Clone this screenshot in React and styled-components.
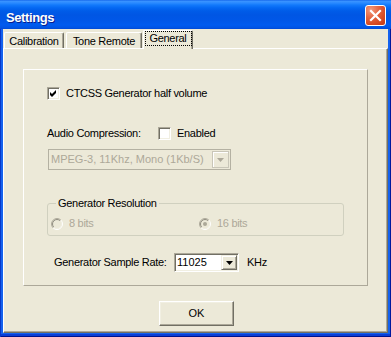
import React from "react";
import styled, { createGlobalStyle } from "styled-components";

const FONT = `"Liberation Sans", Arial, sans-serif`;

const Global = createGlobalStyle`
  html, body { margin: 0; padding: 0; background: #fff; overflow: hidden; }
  #root { width: 391px; height: 337px; }
`;

const Window = styled.div`
  width: 391px;
  height: 337px;
  box-sizing: border-box;
  display: flex;
  flex-direction: column;
  background: #1462EE;
  box-shadow: inset 1px 0 #0837C8, inset -1px 0 #00189C, inset 0 -1px #00138C, inset 0 -3px #0A3ED6;
  font-family: ${FONT};
`;

const TitleBar = styled.div`
  height: 29px;
  flex: none;
  box-sizing: border-box;
  display: flex;
  justify-content: space-between;
  align-items: flex-start;
  padding: 0 5px 0 6px;
  background: linear-gradient(
    180deg,
    #0A5BE6 0px,
    #3D95FF 1px,
    #2A8AFF 3px,
    #1279FB 5px,
    #0467F2 8px,
    #005CE8 11px,
    #0056E4 15px,
    #0057E8 21px,
    #005BEF 25px,
    #0053E3 28px,
    #0047D3 29px
  );
`;

const TitleText = styled.div`
  margin-top: 10px;
  font: bold 13px/15px ${FONT};
  letter-spacing: -0.4px;
  color: #fff;
  text-shadow: 1px 1px 0 #0A1E8C;
`;

const CloseButton = styled.div`
  margin-top: 5px;
  width: 21px;
  height: 21px;
  box-sizing: border-box;
  border: 1px solid #fff;
  border-radius: 3px;
  background: radial-gradient(circle at 25% 20%, #F29A7C 0%, #E3633F 40%, #D4461F 75%, #C13A16 100%);
  display: flex;
  align-items: center;
  justify-content: center;
`;

const Client = styled.div`
  flex: 1;
  margin: 0 3px 4px 3px;
  background: #ECE9D8;
  display: flex;
  flex-direction: column;
  padding-top: 1px;
  box-sizing: border-box;
`;

const TabStrip = styled.div`
  height: 18px;
  flex: none;
  display: flex;
  align-items: flex-end;
  padding-left: 1px;
`;

const Tab = styled.div`
  box-sizing: border-box;
  width: ${(p) => p.$w}px;
  margin-left: ${(p) => p.$ml || 0}px;
  height: ${(p) => (p.$active ? 19 : 16)}px;
  margin-bottom: ${(p) => (p.$active ? -1 : 0)}px;
  position: relative;
  z-index: ${(p) => (p.$active ? 2 : 1)};
  background: #ECE9D8;
  border-top: 1px solid #fff;
  border-left: 1px solid #fff;
  border-right: 1px solid #716F64;
  box-shadow: inset -1px 0 #ACA899;
  border-radius: 2px 2px 0 0;
  display: flex;
  justify-content: center;
  align-items: flex-start;
  padding-top: ${(p) => (p.$active ? 0 : 2)}px;
  font: 11px/13px ${FONT};
  letter-spacing: -0.3px;
  color: #000;
`;

const FocusRect = styled.span`
  box-sizing: border-box;
  width: 47px;
  height: 15px;
  border: 1px dotted #000;
  display: flex;
  justify-content: center;
`;

const Panel = styled.div`
  flex: 1;
  display: flex;
  flex-direction: column;
  align-items: flex-start;
  border-top: 1px solid #fff;
  border-left: 1px solid #fff;
  border-right: 1px solid #716F64;
  border-bottom: 1px solid #716F64;
  box-shadow: inset -1px -1px #ACA899;
`;

const InnerBox = styled.div`
  margin: 20px 0 0 19px;
  width: 345px;
  box-sizing: border-box;
  border: 1px solid;
  border-color: #fff #ACA899 #ACA899 #fff;
  padding: 0 0 13px 23px;
  display: flex;
  flex-direction: column;
  align-items: flex-start;
`;

const Row = styled.div`
  display: flex;
  align-items: center;
  height: ${(p) => p.$h || 13}px;
  margin-top: ${(p) => p.$mt || 0}px;
  margin-left: ${(p) => p.$ml || 0}px;
`;

const Label = styled.span`
  font: 11px/13px ${FONT};
  letter-spacing: -0.3px;
  color: ${(p) => (p.$disabled ? "#ACA899" : "#000")};
  width: ${(p) => (p.$w ? `${p.$w}px` : "auto")};
  margin-left: ${(p) => p.$ml || 0}px;
  white-space: nowrap;
`;

const CheckBox = styled.span`
  width: 13px;
  height: 13px;
  box-sizing: border-box;
  flex: none;
  border: 1px solid;
  border-color: #ACA899 #fff #fff #ACA899;
  box-shadow: inset 1px 1px #716F64, inset -1px -1px #F1EFE2;
  background: #fff;
  display: block;
  svg { display: block; }
`;

const Combo = styled.div`
  box-sizing: border-box;
  width: ${(p) => p.$w}px;
  height: ${(p) => p.$h}px;
  margin-top: ${(p) => p.$mt || 0}px;
  margin-left: ${(p) => p.$ml || 0}px;
  display: flex;
  align-items: stretch;
  ${(p) =>
    p.$disabled
      ? `
    border: 1px solid #B4B1A2;
    background: #ECE9D8;
    padding: 1px;
  `
      : `
    border: 1px solid;
    border-color: #ACA899 #fff #fff #ACA899;
    box-shadow: inset 1px 1px #716F64, inset -1px -1px #F1EFE2;
    background: #fff;
    padding: 1px;
  `}
`;

const ComboText = styled.span`
  flex: 1;
  display: flex;
  align-items: center;
  padding-left: ${(p) => p.$pl || 1}px;
  font: 11px/13px ${FONT};
  letter-spacing: ${(p) => p.$ls ?? -0.3}px;
  color: ${(p) => (p.$disabled ? "#ACA899" : "#000")};
  white-space: nowrap;
  overflow: hidden;
`;

const DropButton = styled.span`
  width: ${(p) => p.$w}px;
  box-sizing: border-box;
  flex: none;
  display: flex;
  align-items: center;
  justify-content: center;
  background: #ECE9D8;
  ${(p) =>
    p.$disabled
      ? `
    border: 1px solid #C9C6B8;
    box-shadow: inset 1px 1px #fff;
  `
      : `
    border: 1px solid;
    border-color: #F1EFE2 #716F64 #716F64 #F1EFE2;
    box-shadow: inset 1px 1px #fff, inset -1px -1px #ACA899;
  `}
  svg { display: block; }
`;

const GroupBox = styled.fieldset`
  margin: 27px 0 0 0;
  min-width: 0;
  width: 297px;
  box-sizing: border-box;
  border: 1px solid #D0D0BF;
  border-radius: 3px;
  padding: 7px 0 5px 3px;
`;

const Legend = styled.legend`
  margin-left: 5px;
  padding: 0 2px;
  font: 11px/13px ${FONT};
  letter-spacing: -0.3px;
  color: #000;
`;

const RadioGrid = styled.div`
  display: grid;
  grid-template-columns: 148px auto;
  height: 13px;
  align-items: center;
`;

const RadioItem = styled.div`
  display: flex;
  align-items: center;
  svg { display: block; flex: none; }
`;

const Button = styled.div`
  margin: 15px 0 0 155px;
  width: 75px;
  height: 25px;
  box-sizing: border-box;
  border: 1px solid;
  border-color: #fff #716F64 #716F64 #fff;
  box-shadow: inset -1px -1px #ACA899, inset 1px 1px #F1EFE2;
  background: #ECE9D8;
  display: flex;
  align-items: center;
  justify-content: center;
  font: 11px/13px ${FONT};
  color: #000;
`;

const CheckMark = () => (
  <svg width="11" height="11" viewBox="0 0 11 11">
    <path d="M2 4 L4 6 L8 2 L8 5 L4 9 L2 7 Z" fill="#000" />
  </svg>
);

const Arrow = ({ color }) => (
  <svg width="7" height="4" viewBox="0 0 7 4">
    <path d="M0 0 H7 L3.5 4 Z" fill={color} />
  </svg>
);

const Radio = ({ checked }) => {
  const arc = (r, c = 6) => {
    const d = r * 0.7071;
    return {
      tl: `M ${c - d} ${c + d} A ${r} ${r} 0 0 1 ${c + d} ${c - d}`,
      br: `M ${c + d} ${c - d} A ${r} ${r} 0 0 1 ${c - d} ${c + d}`,
    };
  };
  const o = arc(5.5);
  const i = arc(4.5);
  return (
    <svg width="12" height="12" viewBox="0 0 12 12">
      <circle cx="6" cy="6" r="4.5" fill="#ECE9D8" />
      <path d={o.tl} stroke="#ACA899" fill="none" strokeWidth="1" />
      <path d={o.br} stroke="#FFFFFF" fill="none" strokeWidth="1" />
      <path d={i.tl} stroke="#8F8C80" fill="none" strokeWidth="1" />
      <path d={i.br} stroke="#F1EFE2" fill="none" strokeWidth="1" />
      {checked && <circle cx="6" cy="6" r="2" fill="#ACA899" />}
    </svg>
  );
};

export default function App() {
  return (
    <>
      <Global />
      <Window>
        <TitleBar>
          <TitleText>Settings</TitleText>
          <CloseButton>
            <svg width="19" height="19" viewBox="0 0 19 19">
              <path d="M5 5 L14 14 M14 5 L5 14" stroke="#fff" strokeWidth="2.2" strokeLinecap="square" />
            </svg>
          </CloseButton>
        </TitleBar>
        <Client>
          <TabStrip>
            <Tab $w={60}>Calibration</Tab>
            <Tab $w={76} $ml={2}>Tone Remote</Tab>
            <Tab $w={50} $ml={1} $active>
              <FocusRect>General</FocusRect>
            </Tab>
          </TabStrip>
          <Panel>
            <InnerBox>
              <Row $mt={17}>
                <CheckBox>
                  <CheckMark />
                </CheckBox>
                <Label $ml={6}>CTCSS Generator half volume</Label>
              </Row>
              <Row $mt={27}>
                <Label $w={111}>Audio Compression:</Label>
                <CheckBox />
                <Label $ml={6}>Enabled</Label>
              </Row>
              <Combo $disabled $w={183} $h={21} $mt={9} $ml={1}>
                <ComboText $disabled $pl={1} $ls={0}>MPEG-3, 11Khz, Mono (1Kb/S)</ComboText>
                <DropButton $disabled $w={17}>
                  <Arrow color="#ACA899" />
                </DropButton>
              </Combo>
              <GroupBox>
                <Legend>Generator Resolution</Legend>
                <RadioGrid>
                  <RadioItem>
                    <Radio />
                    <Label $disabled $ml={6}>8 bits</Label>
                  </RadioItem>
                  <RadioItem>
                    <Radio checked />
                    <Label $disabled $ml={6}>16 bits</Label>
                  </RadioItem>
                </RadioGrid>
              </GroupBox>
              <Row $h={19} $mt={17} $ml={7}>
                <Label $w={120}>Generator Sample Rate:</Label>
                <Combo $w={65} $h={19}>
                  <ComboText $pl={1} $ls={0}>11025</ComboText>
                  <DropButton $w={16}>
                    <Arrow color="#000" />
                  </DropButton>
                </Combo>
                <Label $ml={8}>KHz</Label>
              </Row>
            </InnerBox>
            <Button>OK</Button>
          </Panel>
        </Client>
      </Window>
    </>
  );
}
